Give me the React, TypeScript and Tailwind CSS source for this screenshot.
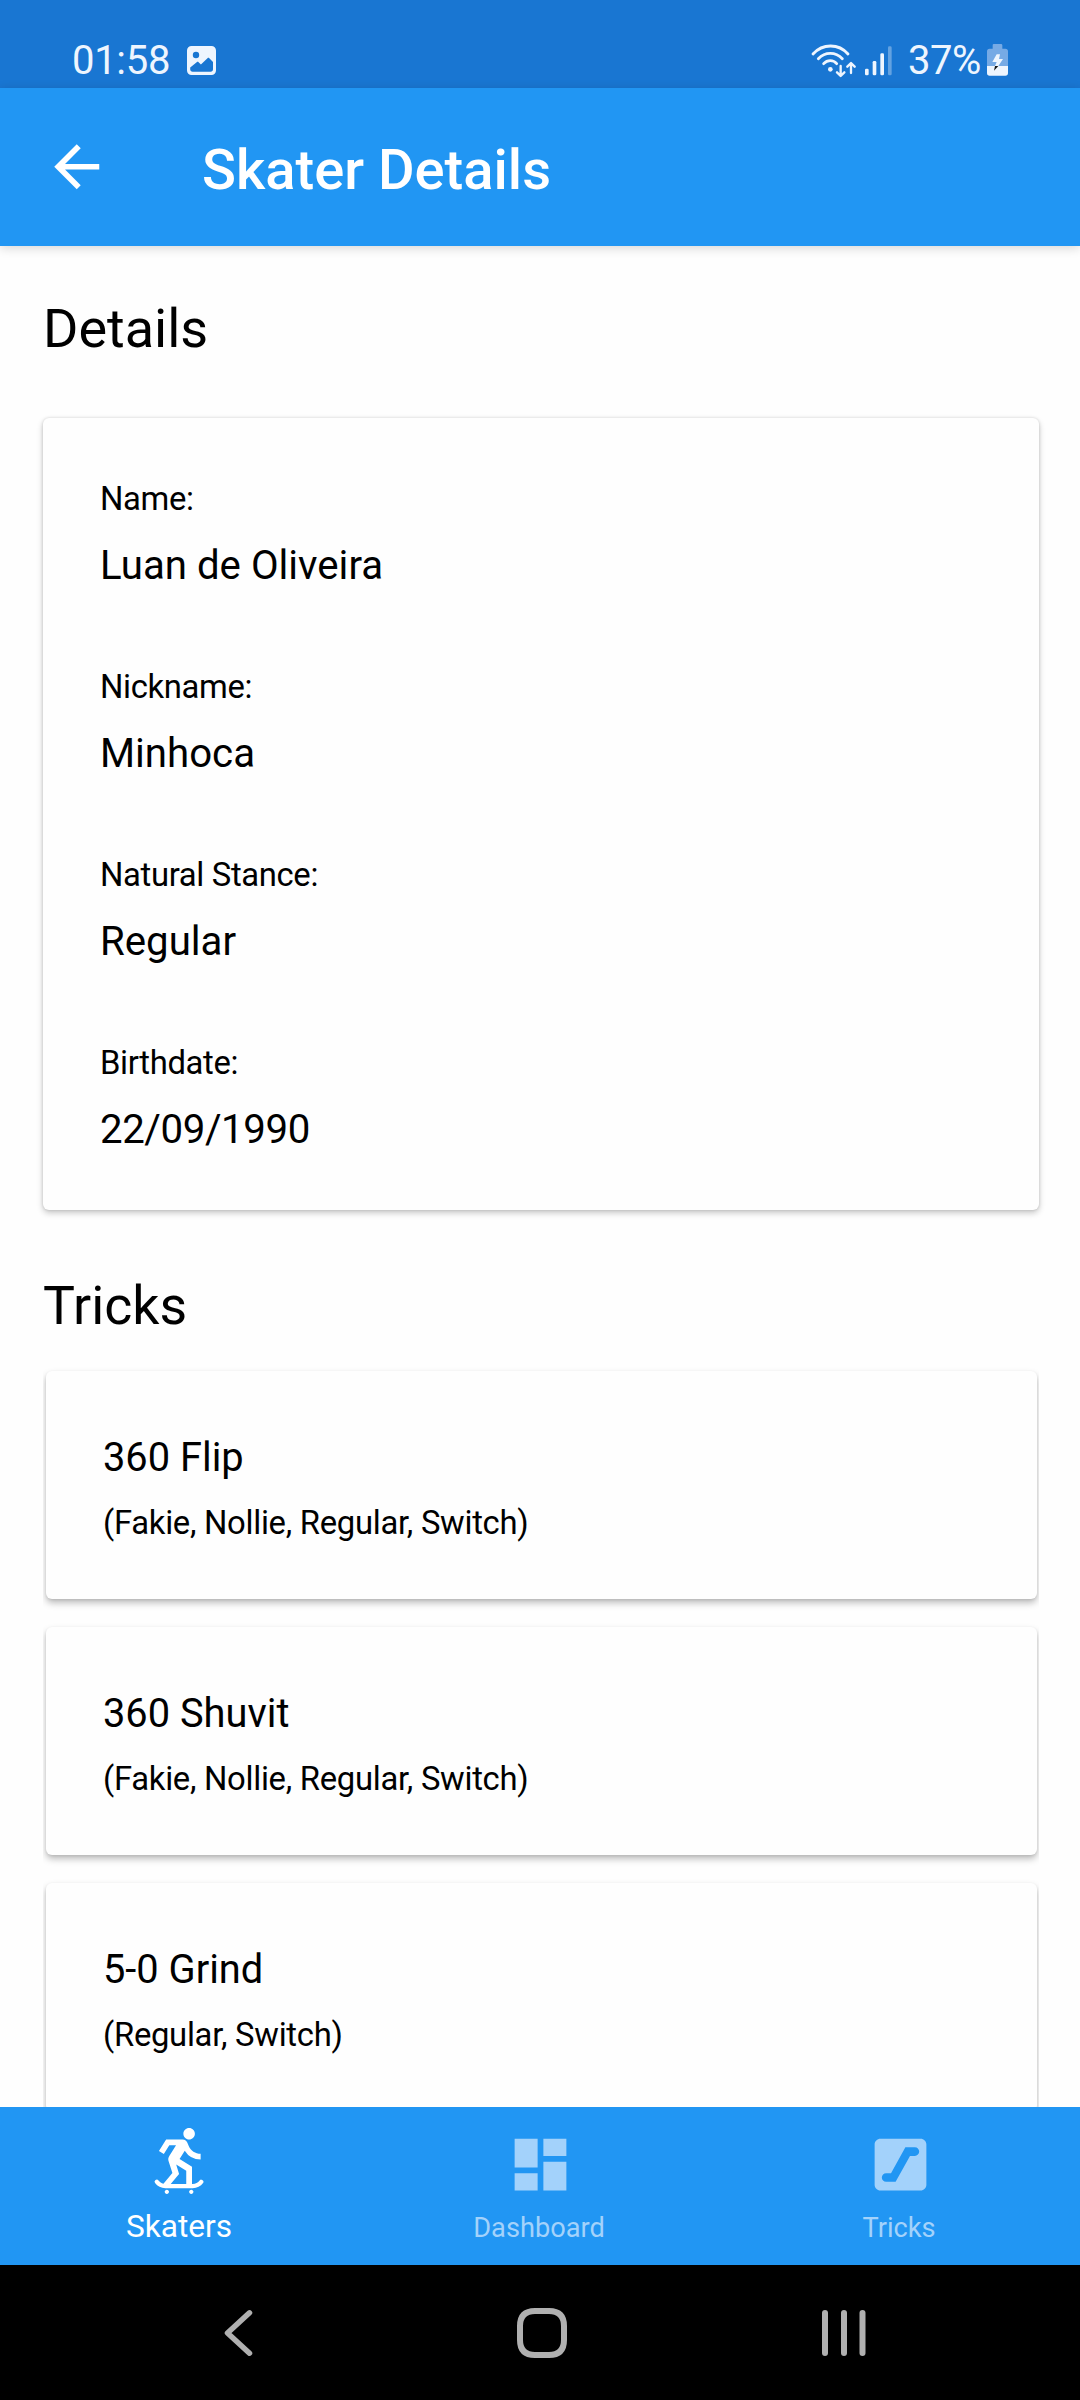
import React from 'react';
import { MdArrowBack, MdDashboard, MdEscalator, MdSkateboarding } from 'react-icons/md';

const details = [
  { label: 'Name:', value: 'Luan de Oliveira', spacing: 'tracking-normal' },
  { label: 'Nickname:', value: 'Minhoca', spacing: 'tracking-normal' },
  { label: 'Natural Stance:', value: 'Regular', spacing: 'tracking-normal' },
  { label: 'Birthdate:', value: '22/09/1990', spacing: 'tracking-[-0.400px]' },
];

const tricks = [
  { name: '360 Flip', stances: '(Fakie, Nollie, Regular, Switch)' },
  { name: '360 Shuvit', stances: '(Fakie, Nollie, Regular, Switch)' },
  { name: '5-0 Grind', stances: '(Regular, Switch)' },
];

function PictureIcon() {
  return (
    <svg className="h-[29px] w-[29px]" viewBox="0 0 29 29">
      <path
        fill="#eef5fe"
        fillRule="evenodd"
        d="M4.5 0h20A4.5 4.5 0 0 1 29 4.500v20a4.500 4.500 0 0 1-4.500 4.500h-20A4.500 4.500 0 0 1 0 24.500v-20A4.500 4.500 0 0 1 4.500 0zM9 5.800a3.200 3.200 0 1 0 0 6.400a3.200 3.200 0 0 0 0-6.400zM3.200 21.500v1.800c0 1.500 1 2.400 2.400 2.400h18c1.500 0 2.400-1 2.400-2.400v-7.300l-3.700-3.800c-.6-.5-1.200-.5-1.800 0l-6.600 6.400l-2.300-2.400c-.6-.6-1.300-.6-1.900 0z"
      />
    </svg>
  );
}

function WifiIcon() {
  return (
    <svg className="h-[34px] w-[46px]" viewBox="0 0 138 102" fill="none" stroke="#eef5fe" strokeWidth="8.500" strokeLinecap="round" strokeLinejoin="round">
      <path d="M9 30C38 -2 86 -2 114 30M25 44C45 23 77 23 97 44M41 59C52 47 70 47 80 59" />
      <circle cx="61" cy="76" r="7" fill="#eef5fe" stroke="none" />
      <path strokeWidth="7" d="M92 66V95M81 85L92 96L103 85M123 87V58M112 68L123 57L134 68" />
    </svg>
  );
}

function SignalIcon() {
  return (
    <svg className="h-[30px] w-[27px]" viewBox="0 0 81 90" fill="#eef5fe">
      <rect x="0" y="68" width="11" height="20" rx="4" />
      <rect x="23" y="45" width="11" height="43" rx="4" />
      <rect x="46" y="22" width="11" height="66" rx="4" />
      <rect x="69" y="1" width="11" height="87" rx="4" opacity="0.35" />
    </svg>
  );
}

function BatteryIcon() {
  return (
    <svg className="h-8 w-[21px]" viewBox="0 0 63 96">
      <path fill="#76aae5" d="M20 0h22q4 0 4 4v10h9q8 0 8 8v44H0V22q0-8 8-8h9V4q0-4 3-4z" />
      <path fill="#eef5fe" d="M0 66h63v21q0 8-8 8H8q-8 0-8-8z" />
      <path fill="#eef5fe" d="M29 31h10l-3 14h12L34 66H24l5-12H16z" />
      <path fill="#101418" d="M24 66h10L21 80z" />
    </svg>
  );
}

function StatusBar() {
  return (
    <div className="flex h-[88px] shrink-0 items-start justify-between bg-[#1976d2] px-[72px] text-[40px] leading-[47px] text-[#eef5fe]">
      <div className="flex pt-[37px]">
        <span className="w-[115px] tracking-[-0.300px]">01:58</span>
        <span className="mt-[9px]"><PictureIcon /></span>
      </div>
      <div className="flex pt-[37px]">
        <span className="mt-[7px]"><WifiIcon /></span>
        <span className="ml-[9px] mt-[9px]"><SignalIcon /></span>
        <span className="ml-4 w-[79px] tracking-[-0.500px]">37%</span>
        <span className="mt-[7px]"><BatteryIcon /></span>
      </div>
    </div>
  );
}

function TabItem({ icon, label }: { icon: React.ReactNode; label: string }) {
  return (
    <div className="flex flex-1 flex-col items-center gap-[13.500px] pt-[22.500px] text-[27.200px] leading-8 text-[#a3d2fb]">
      {icon}
      <span className="pr-0.5">{label}</span>
    </div>
  );
}

export default function App() {
  return (
    <div className="flex h-[2400px] w-[1080px] flex-col overflow-hidden bg-[#fefefe] font-[Roboto,sans-serif] text-black">
      <StatusBar />
      <header className="relative z-10 flex h-[158px] shrink-0 items-start bg-[#2196f3] pl-[43px] text-white shadow-[0_2px_10px_rgba(0,0,0,0.16)]">
        <MdArrowBack className="mt-[44.500px] size-[67.500px]" />
        <h1 className="ml-[91.500px] mt-[49px] text-[56.100px] font-medium leading-[66px]">Skater Details</h1>
      </header>

      <main className="min-h-0 flex-1 overflow-hidden pl-[43px] pr-[41px] pt-[51px]">
        <h2 className="text-[54px] leading-[63px]">Details</h2>
        <section className="mt-[58px] flex flex-col gap-[79px] rounded-[6px] bg-[#fefefe] px-[57px] pb-[57px] pt-[62px] shadow-[0_3px_6px_rgba(0,0,0,0.22),0_0_3px_rgba(0,0,0,0.14)]">
          {details.map((d) => (
            <div key={d.label} className="flex flex-col gap-6">
              <span className="text-[32.800px] leading-[38px] tracking-[-0.340px]">{d.label}</span>
              <span className={`text-[40.200px] leading-[47px] ${d.spacing}`}>{d.value}</span>
            </div>
          ))}
        </section>

        <h2 className="mt-16 text-[53.600px] leading-[63px]">Tricks</h2>
        <div className="mt-[34px] flex flex-col gap-7 overflow-x-clip pl-[3px] pr-0.5">
          {tricks.map((t) => (
            <section
              key={t.name}
              className="flex flex-col gap-[23px] rounded-[6px] bg-[#fefefe] px-[57px] pb-[57px] pt-[63px] shadow-[0_4px_7px_rgba(0,0,0,0.26),0_1px_3px_rgba(0,0,0,0.08)]"
            >
              <span className="text-[39.800px] leading-[47px]">{t.name}</span>
              <span className="text-[32.800px] leading-[38px] tracking-[-0.280px]">{t.stances}</span>
            </section>
          ))}
        </div>
      </main>

      <nav className="flex h-[158px] shrink-0 bg-[#2196f3]">
        <div className="flex flex-1 flex-col items-center gap-[14.500px] pt-[17.500px] text-[31.600px] leading-[37px] text-white">
          <MdSkateboarding className="size-[69px]" />
          <span className="pr-0.5">Skaters</span>
        </div>
        <TabItem icon={<MdDashboard className="size-[69px]" />} label="Dashboard" />
        <TabItem icon={<MdEscalator className="size-[69px]" />} label="Tricks" />
      </nav>

      <div className="flex h-[135px] shrink-0 items-start justify-between bg-black pl-[224px] pr-[214px] pt-[43px]">
        <svg className="h-[50px] w-[29px]" viewBox="0 0 29 50" fill="none" stroke="#b0b0b0" strokeWidth="5.500" strokeLinecap="round" strokeLinejoin="round">
          <path d="M25.500 4.800L3.500 25L25.500 45.200" />
        </svg>
        <svg className="ml-2 h-[50px] w-[50px]" viewBox="0 0 50 50" fill="none" stroke="#b0b0b0" strokeWidth="6">
          <path d="M18 3H32C42 3 47 8 47 18V32C47 42 42 47 32 47H18C8 47 3 42 3 32V18C3 8 8 3 18 3Z" />
        </svg>
        <svg className="h-[50px] w-11" viewBox="0 0 44 50" fill="#b0b0b0">
          <rect x="0" y="2" width="6" height="46" rx="3" />
          <rect x="19" y="2" width="6" height="46" rx="3" />
          <rect x="37.500" y="2" width="6" height="46" rx="3" />
        </svg>
      </div>
    </div>
  );
}
